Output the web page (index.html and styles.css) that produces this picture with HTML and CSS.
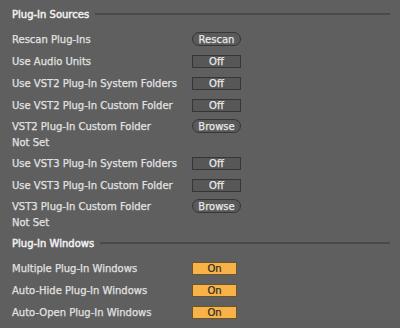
FILE: index.html
```html
<!DOCTYPE html>
<html lang="en">
<head>
  <meta charset="UTF-8" />
  <title>Preferences - Plug-Ins</title>
  <link rel="stylesheet" href="styles.css">
</head>
<body>

  <div class="prefs">
    <div class="section-title">
      <span>Plug-In Sources</span>
      <div class="rule"></div>
    </div>

    <div class="row">
      <span class="label">Rescan Plug-Ins</span>
      <button class="btn pill">Rescan</button>
    </div>
    <div class="row">
      <span class="label">Use Audio Units</span>
      <button class="btn toggle">Off</button>
    </div>
    <div class="row">
      <span class="label">Use VST2 Plug-In System Folders</span>
      <button class="btn toggle">Off</button>
    </div>
    <div class="row">
      <span class="label">Use VST2 Plug-In Custom Folder</span>
      <button class="btn toggle">Off</button>
    </div>
    <div class="folder">
      <div class="row short">
        <span class="label">VST2 Plug-In Custom Folder</span>
        <button class="btn pill">Browse</button>
      </div>
      <div class="path">Not Set</div>
    </div>

    <div class="row">
      <span class="label">Use VST3 Plug-In System Folders</span>
      <button class="btn toggle">Off</button>
    </div>
    <div class="row">
      <span class="label">Use VST3 Plug-In Custom Folder</span>
      <button class="btn toggle">Off</button>
    </div>
    <div class="folder">
      <div class="row short">
        <span class="label">VST3 Plug-In Custom Folder</span>
        <button class="btn pill">Browse</button>
      </div>
      <div class="path">Not Set</div>
    </div>

    <div class="section-title">
      <span>Plug-In Windows</span>
      <div class="rule"></div>
    </div>

    <div class="row">
      <span class="label">Multiple Plug-In Windows</span>
      <button class="btn toggle on">On</button>
    </div>
    <div class="row">
      <span class="label">Auto-Hide Plug-In Windows</span>
      <button class="btn toggle on">On</button>
    </div>
    <div class="row">
      <span class="label">Auto-Open Plug-In Windows</span>
      <button class="btn toggle on">On</button>
    </div>
  </div>

</body>
</html>
```

FILE: styles.css
```css
* { box-sizing: border-box; margin: 0; padding: 0; }

body {
  background-color: #5f5f5f;
  font-family: 'DejaVu Sans', 'Liberation Sans', sans-serif;
  font-size: 10px;
  color: #e2e2e2;
  -webkit-text-stroke: 0.25px #e2e2e2;
}

.prefs { padding: 3px 10px 0 12px; }

.section-title {
  display: flex;
  align-items: center;
  height: 22px;
  margin-bottom: 3px;
  color: #f2f2f2;
  -webkit-text-stroke: 0.45px #f2f2f2;
}

.section-title .rule {
  flex: 1;
  height: 2px;
  margin-left: 6px;
  background-color: #4a4a4a;
}

.row {
  display: flex;
  align-items: center;
  height: 22px;
}

.row.short { height: 20px; }

.label {
  width: 180px;
  white-space: nowrap;
}

.folder { margin-bottom: 2px; }

.path {
  height: 14px;
  line-height: 14px;
}

.btn {
  width: 49px;
  height: 13px;
  font-family: inherit;
  font-size: 10px;
  line-height: 11px;
  color: #e8e8e8;
  -webkit-text-stroke: 0.25px #e8e8e8;
  background-color: #575757;
  border: 1px solid #363636;
  text-align: center;
}

.btn.pill {
  height: 14px;
  border-radius: 7px;
  background-color: #5a5a5a;
}

.btn.on {
  width: 45px;
  color: #2a2a2a;
  -webkit-text-stroke: 0.2px #2a2a2a;
  background-color: #f7b347;
  border-color: #6e5428;
}
```
